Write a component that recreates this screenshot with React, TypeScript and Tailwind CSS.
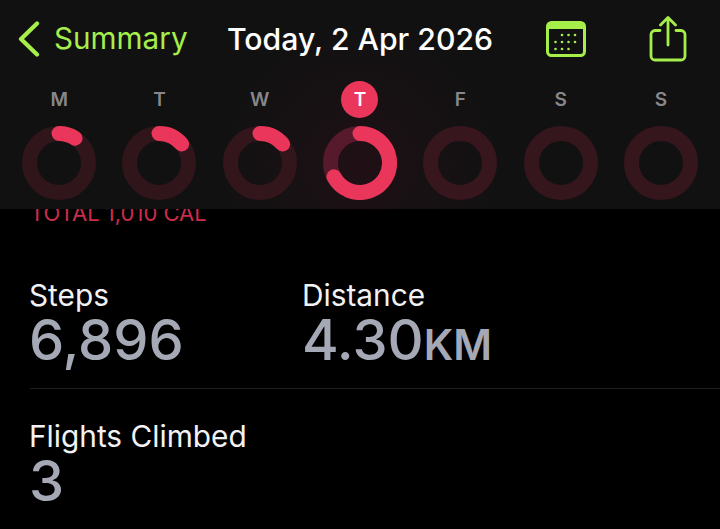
import React from "react";

const days = [
  { label: "M", end: 33, track: "#30151b" },
  { label: "T", end: 50, track: "#30151b" },
  { label: "W", end: 50, track: "#33151c" },
  { label: "T", end: 242, track: "#571a2c", today: true },
  { label: "F", end: 0, track: "#38161e" },
  { label: "S", end: 0, track: "#36161d" },
  { label: "S", end: 0, track: "#36161d" },
];

const RADIUS = 29.5;

function arcPath(endDeg: number) {
  const rad = (endDeg * Math.PI) / 180;
  const x = 37 + RADIUS * Math.sin(rad);
  const y = 37 - RADIUS * Math.cos(rad);
  const large = endDeg > 180 ? 1 : 0;
  return `M 37 ${37 - RADIUS} A ${RADIUS} ${RADIUS} 0 ${large} 1 ${x} ${y}`;
}

const Ring = ({ end, track }: { end: number; track: string }) => (
  <svg width="74" height="74" viewBox="0 0 74 74">
    <circle cx="37" cy="37" r={RADIUS} fill="none" stroke={track} strokeWidth="15" />
    {end > 0 && (
      <path d={arcPath(end)} fill="none" stroke="#e9365a" strokeWidth="15" strokeLinecap="round" />
    )}
  </svg>
);

const Stat = ({ label, children }: { label: string; children: React.ReactNode }) => (
  <div className="-ml-px flex flex-col">
    <span className="text-[29.8px] leading-[36px] text-[#f2f2f4]">{label}</span>
    <span className="text-[56px] leading-[54px] font-medium text-[#a5a9b6]">{children}</span>
  </div>
);

export default function App() {
  return (
    <div className="h-[529px] w-[720px] overflow-hidden bg-black font-['Inter','Liberation_Sans',sans-serif]">
      <div className="relative z-10 h-[209px] bg-[radial-gradient(circle_at_360px_165px,#211015_0%,#181114_15%,#121112_35%)]">
        <div className="flex h-[81px] items-center pb-[3px] pl-[18px]">
          <svg width="22" height="36" viewBox="0 0 22 36" fill="none" className="shrink-0">
            <path d="M19 2.5 L3 18 L19 33.5" stroke="#a6ef4a" strokeWidth="4.2" strokeLinecap="round" strokeLinejoin="round" />
          </svg>
          <span className="ml-[14px] w-[173px] shrink-0 text-[29.7px] leading-none text-[#a6ef4a]">Summary</span>
          <span className="w-[319px] shrink-0 text-[30.2px] leading-none font-medium whitespace-nowrap text-white">Today, 2 Apr 2026</span>
          <svg width="40" height="36" viewBox="0 0 40 36" fill="none" className="shrink-0">
            <rect x="1.5" y="1.5" width="37" height="33" rx="4" stroke="#a6ef4a" strokeWidth="3" />
            <path d="M2 8 V5 a3 3 0 0 1 3-3 H35 a3 3 0 0 1 3 3 V8 Z" fill="#a6ef4a" />
            <g fill="#a6ef4a">
              <circle cx="16" cy="14" r="1.3" /><circle cx="22.5" cy="14" r="1.3" /><circle cx="29" cy="14" r="1.3" />
              <circle cx="9.5" cy="21" r="1.3" /><circle cx="16" cy="21" r="1.3" /><circle cx="22.5" cy="21" r="1.3" /><circle cx="29" cy="21" r="1.3" />
              <circle cx="9.5" cy="28" r="1.3" /><circle cx="16" cy="28" r="1.3" /><circle cx="22.5" cy="28" r="1.3" />
            </g>
          </svg>
          <svg width="38" height="46" viewBox="0 0 38 46" fill="none" className="ml-[63px] shrink-0">
            <path d="M11 14.5 H6 a4 4 0 0 0-4 4 V40 a4 4 0 0 0 4 4 H32 a4 4 0 0 0 4-4 V18.5 a4 4 0 0 0-4-4 H27" stroke="#a6ef4a" strokeWidth="2.8" strokeLinecap="round" />
            <path d="M19 29 V2 M11.5 9 L19 1.5 L26.5 9" stroke="#a6ef4a" strokeWidth="2.8" strokeLinecap="round" strokeLinejoin="round" />
          </svg>
        </div>
        <div className="ml-[9px] grid w-[702px] grid-cols-7">
          {days.map((d, i) => (
            <div key={i} className="flex flex-col items-center">
              <div className={`flex h-[37px] w-[37px] items-center justify-center rounded-full text-[19px] leading-none font-semibold ${d.today ? "bg-[#e9365a] text-white" : "text-[#87878b]"}`}>
                {d.label}
              </div>
              <div className="mt-[8px] flex">
                <Ring end={d.end} track={d.track} />
              </div>
            </div>
          ))}
        </div>
      </div>

      <div className="-mt-[9px] pl-[30px]">
        <div className="text-[22px] leading-[26px] text-[#c92c4c]">TOTAL 1,010 CAL</div>
        <div className="mt-[51px] flex">
          <div className="w-[273px]">
            <Stat label="Steps">6,896</Stat>
          </div>
          <Stat label="Distance">
            4.30<span className="text-[42px] font-semibold">KM</span>
          </Stat>
        </div>
        <div className="mt-[16px] h-px bg-[#1f1f20]" />
        <div className="mt-[29px]">
          <Stat label="Flights Climbed">3</Stat>
        </div>
      </div>
    </div>
  );
}
